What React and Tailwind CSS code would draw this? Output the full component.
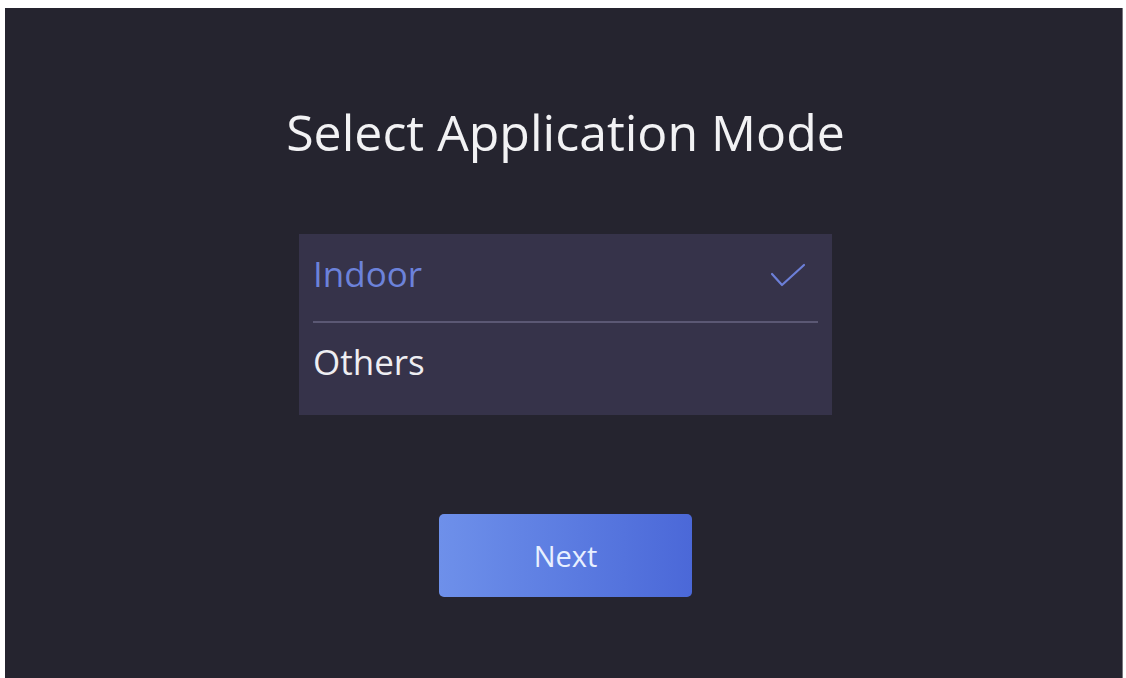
import React, { useState } from "react";

const MODES = ["Indoor", "Others"];

function Check() {
  return (
    <svg width="36" height="26" viewBox="0 0 36 26" fill="none">
      <path d="M2 12 L12 23 L34 3" stroke="#6c7fd8" strokeWidth="2.2" strokeLinecap="round" strokeLinejoin="round" />
    </svg>
  );
}

export default function App() {
  const [mode, setMode] = useState("Indoor");

  return (
    <div className="w-[1126px] h-[678px] bg-white pt-[8px] pl-[5px] pr-[3px] overflow-hidden" style={{ fontFamily: '"Open Sans", "Noto Sans", sans-serif' }}>
      <div className="h-[670px] bg-[#25242f] border-r border-[#77767c] pl-[4px] flex flex-col items-center">
        {/* Title */}
        <h1 className="mt-[86px] text-[50px] leading-[76px] text-[#f2f2f4]">
          Select Application Mode
        </h1>

        {/* Mode list */}
        <div className="mt-[64px] w-[533px] bg-[#36334a] px-[14px]">
          {MODES.map((m, i) => (
            <button
              key={m}
              onClick={() => setMode(m)}
              className={`w-full flex items-center justify-between text-left ${
                i === 0 ? "h-[89px] border-b-2 border-[#5b5874]" : "h-[92px]"
              }`}
            >
              <span className={`text-[35px] ${mode === m ? "text-[#6c82da]" : "text-[#eeeef2]"} ${i === 0 ? "pb-[6px]" : "pb-[14px]"}`}>
                {m}
              </span>
              {mode === m && (
                <span className="pr-[12px] pb-[6px]">
                  <Check />
                </span>
              )}
            </button>
          ))}
        </div>

        {/* Next button */}
        <button className="mt-[99px] w-[253px] h-[83px] rounded-[5px] bg-gradient-to-r from-[#6e90ea] to-[#4b68d8] text-[29px] text-[#e8f0ff]">
          Next
        </button>
      </div>
    </div>
  );
}
